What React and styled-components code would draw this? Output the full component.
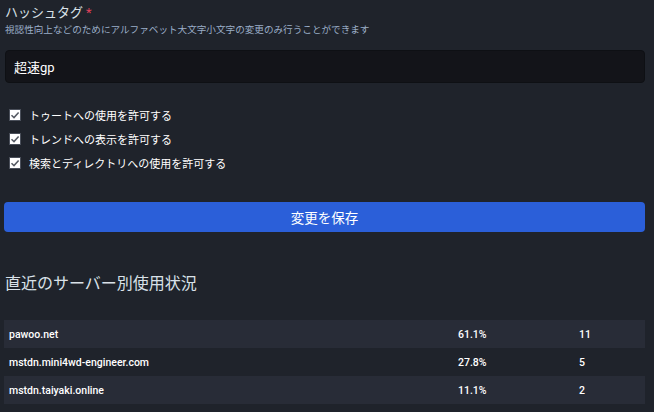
import styled, { createGlobalStyle } from "styled-components";

const GlobalStyle = createGlobalStyle`
  body {
    margin: 0;
    background: #1f232b;
    font-family: Roboto, "Noto Sans CJK JP", sans-serif;
    color: #d9e1e8;
  }
`;

const Page = styled.div`
  width: 641px;
  padding: 4px 0 8px 4px;
`;

const Label = styled.div`
  font-size: 13px;
  line-height: 18px;
  padding-left: 1px;
  color: #d9e1e8;

  span {
    color: #df405a;
    margin-left: 3px;
  }
`;

const Hint = styled.div`
  font-size: 9.6px;
  line-height: 14px;
  margin-top: 1px;
  padding-left: 1px;
  color: #9baec8;
`;

const Input = styled.div`
  margin: 13px 0 0 1px;
  height: 33px;
  box-sizing: border-box;
  border: 1px solid #0e1014;
  border-radius: 4px;
  background: #131419;
  padding: 0 8px;
  display: flex;
  align-items: center;
  font-size: 13px;
  color: #fff;
`;

const Checks = styled.div`
  margin-top: 20px;
`;

const CheckRow = styled.label`
  display: flex;
  align-items: center;
  gap: 8px;
  height: 24px;
  padding-left: 5px;
  font-size: 11px;
  color: #fff;
`;

const Box = styled.span`
  width: 12px;
  height: 12px;
  box-sizing: border-box;
  background: #fff;
  border: 1px solid #4a4f5a;
  display: flex;
  align-items: center;
  justify-content: center;
`;

const SaveButton = styled.button`
  margin-top: 27px;
  width: 100%;
  height: 30px;
  border: 0;
  border-radius: 4px;
  background: #2b5fd9;
  color: #fff;
  font-family: inherit;
  font-size: 13.5px;
`;

const Heading = styled.h3`
  margin: 40px 0 0 1px;
  font-size: 16px;
  line-height: 24px;
  font-weight: 400;
  color: #d9e1e8;
`;

const Table = styled.div`
  margin-top: 24px;
`;

const Row = styled.div`
  display: grid;
  grid-template-columns: 449px 121px 1fr;
  height: 28px;
  align-items: center;
  background: ${(p) => (p.$odd ? "#282c37" : "transparent")};
  font-size: 10.5px;
  font-weight: 500;
  color: #fff;

  div {
    padding-left: 5px;
  }
`;

const servers = [
  ["pawoo.net", "61.1%", "11"],
  ["mstdn.mini4wd-engineer.com", "27.8%", "5"],
  ["mstdn.taiyaki.online", "11.1%", "2"],
];

const checks = [
  "トゥートへの使用を許可する",
  "トレンドへの表示を許可する",
  "検索とディレクトリへの使用を許可する",
];

function Check() {
  return (
    <Box>
      <svg width="10" height="10" viewBox="0 0 10 10">
        <path d="M1.5 5.2 L4 7.6 L8.6 2.4" fill="none" stroke="#555a63" strokeWidth="1.5" />
      </svg>
    </Box>
  );
}

export default function App() {
  return (
    <Page>
      <GlobalStyle />
      <Label>
        ハッシュタグ<span>*</span>
      </Label>
      <Hint>視認性向上などのためにアルファベット大文字小文字の変更のみ行うことができます</Hint>
      <Input>超速gp</Input>
      <Checks>
        {checks.map((c) => (
          <CheckRow key={c}>
            <Check />
            {c}
          </CheckRow>
        ))}
      </Checks>
      <SaveButton>変更を保存</SaveButton>
      <Heading>直近のサーバー別使用状況</Heading>
      <Table>
        {servers.map((s, i) => (
          <Row key={s[0]} $odd={i % 2 === 0}>
            <div>{s[0]}</div>
            <div>{s[1]}</div>
            <div>{s[2]}</div>
          </Row>
        ))}
      </Table>
    </Page>
  );
}
